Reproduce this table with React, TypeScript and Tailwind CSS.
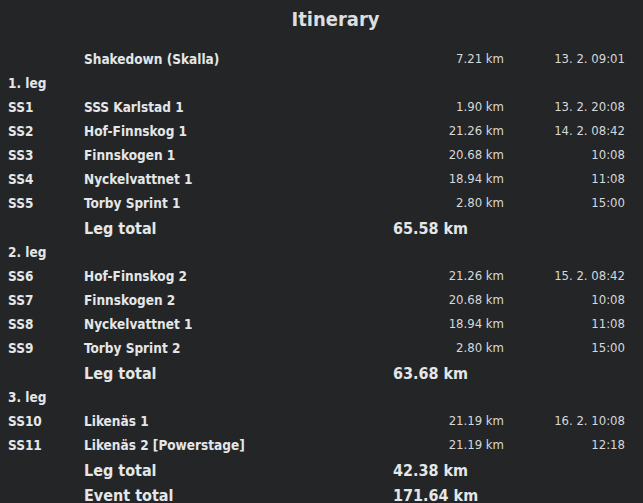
import React from 'react';

type Stage = { code: string; name: string; km: string; time: string };

const legs: { title: string; stages: Stage[]; total: string }[] = [
  {
    title: '1. leg',
    stages: [
      { code: 'SS1', name: 'SSS Karlstad 1', km: '1.90 km', time: '13. 2. 20:08' },
      { code: 'SS2', name: 'Hof-Finnskog 1', km: '21.26 km', time: '14. 2. 08:42' },
      { code: 'SS3', name: 'Finnskogen 1', km: '20.68 km', time: '10:08' },
      { code: 'SS4', name: 'Nyckelvattnet 1', km: '18.94 km', time: '11:08' },
      { code: 'SS5', name: 'Torby Sprint 1', km: '2.80 km', time: '15:00' },
    ],
    total: '65.58 km',
  },
  {
    title: '2. leg',
    stages: [
      { code: 'SS6', name: 'Hof-Finnskog 2', km: '21.26 km', time: '15. 2. 08:42' },
      { code: 'SS7', name: 'Finnskogen 2', km: '20.68 km', time: '10:08' },
      { code: 'SS8', name: 'Nyckelvattnet 1', km: '18.94 km', time: '11:08' },
      { code: 'SS9', name: 'Torby Sprint 2', km: '2.80 km', time: '15:00' },
    ],
    total: '63.68 km',
  },
  {
    title: '3. leg',
    stages: [
      { code: 'SS10', name: 'Likenäs 1', km: '21.19 km', time: '16. 2. 10:08' },
      { code: 'SS11', name: 'Likenäs 2 [Powerstage]', km: '21.19 km', time: '12:18' },
    ],
    total: '42.38 km',
  },
];

const row = 'grid grid-cols-[76px_309px_111px_121px] items-center';

const StageRow = ({ code, name, km, time }: Stage) => (
  <div className={`${row} h-[24px] text-[13px]`}>
    <span className="font-bold text-[13.5px]">{code}</span>
    <span className="font-bold text-[13.5px]">{name}</span>
    <span className="text-right text-[#d6d8da]">{km}</span>
    <span className="text-right text-[#d6d8da]">{time}</span>
  </div>
);

const TotalRow = ({ label, km }: { label: string; km: string }) => (
  <div className={`${row} h-[25px] pt-[2px] text-[16px] font-bold`}>
    <span />
    <span>{label}</span>
    <span>{km}</span>
    <span />
  </div>
);

export default function App() {
  return (
    <div
      className="w-[643px] h-[503px] overflow-hidden bg-[#232527] text-[#e4e6e8]"
      style={{ fontFamily: '"DejaVu Sans Condensed", "DejaVu Sans", sans-serif' }}
    >
      <h1 className="pl-[28px] pt-[4px] h-[47px] text-center text-[20px] font-bold text-[#dcdee0]">
        Itinerary
      </h1>
      <div className="pl-2">
        <StageRow code="" name="Shakedown (Skalla)" km="7.21 km" time="13. 2. 09:01" />
        {legs.map((leg) => (
          <div key={leg.title}>
            <div className="h-[24px] flex items-center text-[13.5px] font-bold">{leg.title}</div>
            {leg.stages.map((s) => (
              <StageRow key={s.code} {...s} />
            ))}
            <TotalRow label="Leg total" km={leg.total} />
          </div>
        ))}
        <TotalRow label="Event total" km="171.64 km" />
      </div>
    </div>
  );
}
